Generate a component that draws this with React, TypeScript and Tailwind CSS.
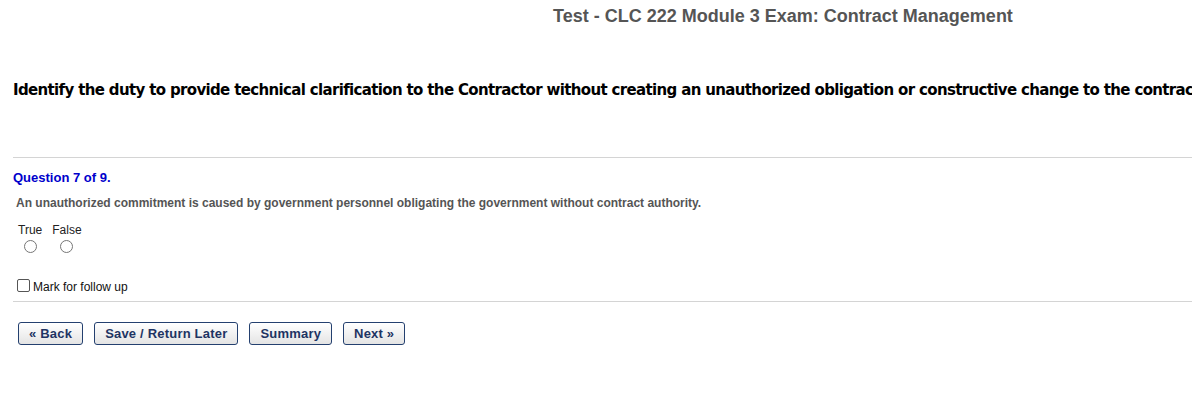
import React from "react";

const navBtn =
  "h-[23px] px-[10px] rounded-[3px] border border-[#24406f] bg-gradient-to-b from-white to-[#e4e4e4] text-[13px] font-bold text-[#1e3463] leading-none shadow-[inset_0_1px_0_#fff] tracking-[0.2px]";

export default function App() {
  return (
    <div className="w-[1192px] h-[412px] overflow-hidden bg-white font-['Liberation_Sans',Arial,sans-serif]">
      <div className="w-[1566px] pt-[5px] text-center">
        <h1 className="text-[18px] font-bold text-[#555555] leading-[22px]">
          Test - CLC 222 Module 3 Exam: Contract Management
        </h1>
      </div>

      <div className="pl-[13px] pt-[54px] pb-[58px]">
        <h2 className="whitespace-nowrap font-['DejaVu_Sans',Verdana,sans-serif] text-[15px] font-bold text-black leading-[18px] tracking-[-0.65px]">
          Identify the duty to provide technical clarification to the Contractor without creating an unauthorized obligation or constructive change to the contract.
        </h2>
      </div>

      <div className="ml-[13px] border-t border-[#d4d4d4]" />

      <div className="pl-[13px] pt-[12px]">
        <div className="text-[13px] font-bold text-[#0000cc] leading-[16px]">Question 7 of 9.</div>
        <p className="mt-[10px] pl-[3px] text-[12px] font-bold text-[#555555] leading-[14px]">
          An unauthorized commitment is caused by government personnel obligating the government without contract authority.
        </p>

        <div className="mt-[13px] pl-[5px] flex gap-[10px] text-[12px] text-[#222222] leading-[14px]">
          <label className="flex flex-col items-center">
            <span>True</span>
            <span className="mt-[3px] w-[13px] h-[13px] rounded-full border border-[#767676] bg-white" />
          </label>
          <label className="flex flex-col items-center">
            <span>False</span>
            <span className="mt-[3px] w-[13px] h-[13px] rounded-full border border-[#767676] bg-white" />
          </label>
        </div>

        <label className="mt-[24px] pl-[4px] flex items-center text-[12px] text-[#111111] leading-[14px]">
          <span className="w-[13px] h-[13px] rounded-[2px] border border-[#555555] bg-white" />
          <span className="ml-[3px] mt-[3px]">Mark for follow up</span>
        </label>
      </div>

      <div className="ml-[13px] mt-[7px] border-t border-[#d4d4d4]" />

      <div className="pl-[18px] pt-[20px] flex gap-[11px]">
        <button className={navBtn}>« Back</button>
        <button className={navBtn}>Save / Return Later</button>
        <button className={navBtn}>Summary</button>
        <button className={navBtn}>Next »</button>
      </div>
    </div>
  );
}
